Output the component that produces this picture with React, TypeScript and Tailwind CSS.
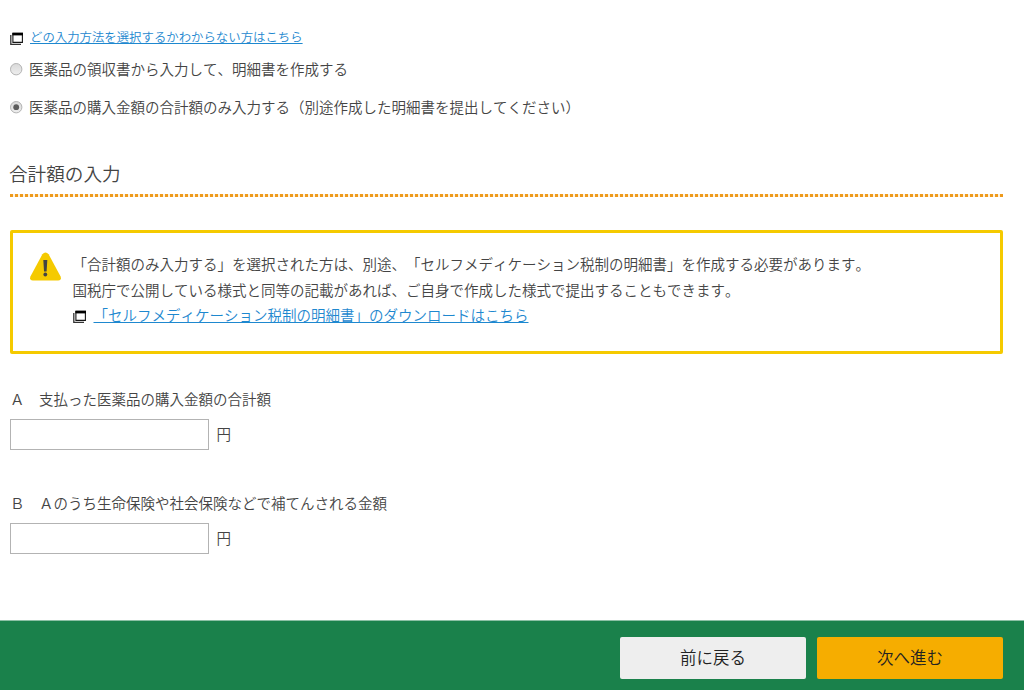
import React from "react";

function WindowIcon() {
  return (
    <svg width="14" height="14" viewBox="0 0 14 14" className="relative top-[2px] shrink-0" fill="none">
      <path d="M2.9 1.5H12.4V10.4H2.9Z" stroke="#151515" strokeWidth="1.1" />
      <path d="M2.4 0.6H13V3.4H2.4Z" fill="#000" />
      <path d="M0.8 3V12.4H11" stroke="#333" strokeWidth="1.3" />
    </svg>
  );
}

function WarningIcon() {
  return (
    <svg width="32" height="30" viewBox="0 0 32 30" className="shrink-0">
      <path d="M12.4 2.3Q15.5 -1.1 18.6 2.3L30.6 24.5Q31.8 28.3 28.3 28.5H2.7Q-0.8 28.3 0.4 24.5Z" fill="#f5ca00" />
      <path d="M13.3 8H17.3L16.6 19.5H14Z" fill="#444" />
      <circle cx="15.3" cy="22.5" r="1.9" fill="#444" />
    </svg>
  );
}

function Radio({ checked }: { checked: boolean }) {
  return (
    <svg width="13" height="13" viewBox="0 0 13 13" className="shrink-0">
      <defs>
        <linearGradient id="radio" x1="0" y1="0" x2="0" y2="1">
          <stop offset="0" stopColor="#d9d9d9" />
          <stop offset="1" stopColor="#eeeeee" />
        </linearGradient>
      </defs>
      <circle cx="6.2" cy="6.2" r="5.7" fill="url(#radio)" stroke="#b4b4b4" />
      {checked && <circle cx="6.2" cy="6.2" r="2.9" fill="#5c5c5c" />}
    </svg>
  );
}

function Option({ checked, children }: { checked: boolean; children: React.ReactNode }) {
  return (
    <label className="flex h-6 items-center gap-[6px]">
      <Radio checked={checked} />
      <span className="whitespace-nowrap">{children}</span>
    </label>
  );
}

function Amount({ label }: { label: string }) {
  return (
    <div className="flex flex-col">
      <div className="flex h-6 items-center">{label}</div>
      <div className="mt-2 flex items-center gap-[7.5px]">
        <input className="h-[31px] w-[199px] border border-[#b3b3b3] bg-white px-2 outline-none" />
        <span className="pb-[2px]">円</span>
      </div>
    </div>
  );
}

export default function App() {
  return (
    <div className="flex h-[690px] w-[1024px] flex-col overflow-hidden bg-white font-['Noto_Sans_CJK_JP',sans-serif] text-[14.5px] leading-6 font-[350] text-[#444] [font-kerning:none] [text-spacing-trim:space-all]">
      <main className="flex flex-1 flex-col pr-[21px] pl-[10px]">
        <div className="mt-[25px] flex h-6 items-center gap-[6px]">
          <WindowIcon />
          <a className="text-[12.4px] text-[#1e88cf] underline underline-offset-1">どの入力方法を選択するかわからない方はこちら</a>
        </div>
        <div className="mt-[8px] flex flex-col gap-[14px]">
          <Option checked={false}>医薬品の領収書から入力して、明細書を作成する</Option>
          <Option checked>医薬品の購入金額の合計額のみ入力する（別途作成した明細書を提出してください）</Option>
        </div>
        <h2 className="mt-[38px] -ml-px flex h-8 items-center text-[18.6px]">合計額の入力</h2>
        <div className="mt-[5px] h-[3px] bg-[repeating-linear-gradient(90deg,#ee9a1c_0_3px,#fff1dc_3px_5px)]" />
        <section className="mt-[33px] flex h-[124px] rounded-[2px] border-3 border-[#f5ca00] pt-[19px] pl-[17px]">
          <WarningIcon />
          <div className="-mt-px ml-[10.5px] leading-[25.6px] whitespace-nowrap">
            <p>「合計額のみ入力する」を選択された方は、別途、「セルフメディケーション税制の明細書」を作成する必要があります。</p>
            <p>国税庁で公開している様式と同等の記載があれば、ご自身で作成した様式で提出することもできます。</p>
            <p className="flex items-center gap-[7px]">
              <WindowIcon />
              <a className="text-[#1e88cf] underline underline-offset-1">「セルフメディケーション税制の明細書」のダウンロードはこちら</a>
            </p>
          </div>
        </section>
        <div className="mt-[33px] flex flex-col gap-[41px]">
          <Amount label="Ａ　支払った医薬品の購入金額の合計額" />
          <Amount label="Ｂ　Ａのうち生命保険や社会保険などで補てんされる金額" />
        </div>
      </main>
      <footer className="flex h-[70px] items-start justify-end gap-[11px] border-t border-[#8cc0a5] bg-[#1a814b] pt-4 pr-[21px] text-[16.5px] text-[#222]">
        <button className="h-[42px] w-[186px] rounded-[2px] bg-[#eeeeee] pb-[2px]">前に戻る</button>
        <button className="h-[42px] w-[186px] rounded-[2px] bg-[#f6ad00] pb-[2px]">次へ進む</button>
      </footer>
    </div>
  );
}
